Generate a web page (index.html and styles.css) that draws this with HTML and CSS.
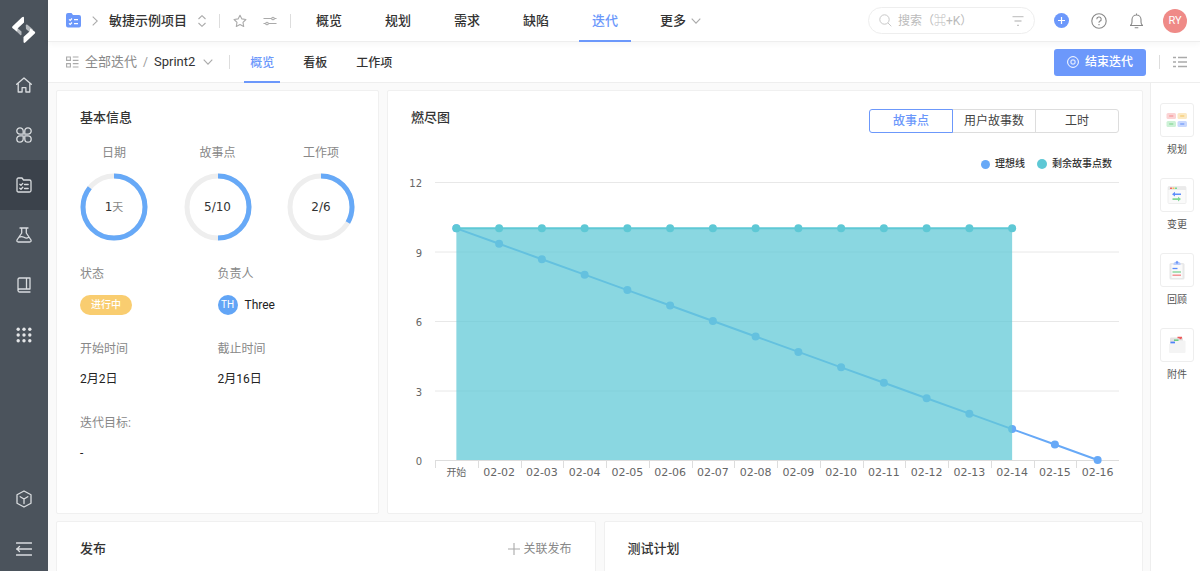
FILE: index.html
```html
<!DOCTYPE html>
<html lang="zh-CN">
<head>
<meta charset="utf-8">
<meta name="viewport" content="width=device-width, initial-scale=1">
<title>敏捷示例项目 - Sprint2</title>
<link rel="stylesheet" href="styles.css">
</head>
<body>
<div class="app">
  <nav class="rail" aria-label="主导航">
    <a class="rail-logo" href="#" aria-label="首页">
      <svg width="24" height="28" viewBox="0 0 24 28">
        <path d="M5.500 12 9.500 15.500V18.500Q9.200 20 8 18.800L3 14Z" fill="#b5b9bd"/>
        <path d="M0.600 10.200 10 1.200Q12 -0.200 12 2V6.500L5.800 12.300 5 15.500 0.600 12.200Q-0.400 11.200 0.600 10.200Z" fill="#fff"/>
        <path d="M13.800 9.500Q14 7.800 15.500 8.800L21 13.500 18 16.500 14 13Z" fill="#b5b9bd"/>
        <path d="M18.300 12.500 22.600 15.500Q23.800 16.500 22.800 17.600L13.500 26.300Q11.500 27.800 11.500 25.500V21L17.500 15.500Z" fill="#fff"/>
      </svg>
    </a>
    <a class="rail-item" href="#" aria-label="工作台">
      <svg class="line" width="16" height="16" viewBox="0 0 16 16"><path d="M0.700 7.300 8 0.900 15.300 7.300M2.200 6.200V15H6.100V10.600H9.900V15H13.800V6.200"/></svg>
    </a>
    <a class="rail-item" href="#" aria-label="应用">
      <svg class="line" width="16" height="16" viewBox="0 0 16 16"><path d="M7.200 7.200H4A3.200 3.200 0 1 1 7.200 4ZM8.800 7.200H12A3.200 3.200 0 1 0 8.800 4ZM7.200 8.800H4A3.200 3.200 0 1 0 7.200 12ZM8.800 8.800H12A3.200 3.200 0 1 1 8.800 12Z"/></svg>
    </a>
    <a class="rail-item rail-item-active" href="#" aria-label="项目" aria-current="page">
      <svg class="line" width="16" height="16" viewBox="0 0 16 16"><path d="M1 2.500Q1 1 2.500 1H6L7.500 3H13.500Q15 3 15 4.500V13.500Q15 15 13.500 15H2.500Q1 15 1 13.500ZM3.800 7.300 5 8.300 6.800 6.400M3.800 11.200 5 12.200 6.800 10.300M8.500 7.500H12.200M8.500 11.500H12.200"/></svg>
    </a>
    <a class="rail-item" href="#" aria-label="测试">
      <svg class="line" width="16" height="16" viewBox="0 0 16 16"><path d="M4 1H12M5.700 1V6L1 13Q0.500 15 2.300 15H13.700Q15.500 15 15 13L10.300 6V1M3 10.300Q5.500 8.800 8 10.300T12.800 10.300"/></svg>
    </a>
    <a class="rail-item" href="#" aria-label="知识">
      <svg class="line" width="16" height="16" viewBox="0 0 16 16"><path d="M14 12V1H3.500Q2 1 2 2.500V13.500Q2 15 3.500 15H14M2 13.500Q2 12 3.500 12H14M10.500 1V12"/></svg>
    </a>
    <a class="rail-item" href="#" aria-label="更多应用">
      <svg width="16" height="16" viewBox="0 0 16 16" fill="#e4e6e8"><circle cx="2.200" cy="2.200" r="1.700"/><circle cx="8" cy="2.200" r="1.700"/><circle cx="13.800" cy="2.200" r="1.700"/><circle cx="2.200" cy="8" r="1.700"/><circle cx="8" cy="8" r="1.700"/><circle cx="13.800" cy="8" r="1.700"/><circle cx="2.200" cy="13.800" r="1.700"/><circle cx="8" cy="13.800" r="1.700"/><circle cx="13.800" cy="13.800" r="1.700"/></svg>
    </a>
    <a class="rail-item rail-bottom" href="#" aria-label="产品">
      <svg class="line" width="16" height="18" viewBox="0 0 16 18"><path d="M8 1 15 4.800V13.200L8 17 1 13.200V4.800ZM4.200 6.700 8 9 11.800 6.700M8 9V13.500"/></svg>
    </a>
    <button class="rail-item" type="button" aria-label="展开导航">
      <svg class="line" width="16" height="14" viewBox="0 0 16 14"><path d="M0.500 1H15.500M0.500 7H15.500M0.500 13H15.500M3.500 4.500 1 7 3.500 9.500"/></svg>
    </button>
  </nav>

  <div class="main">
    <header class="topbar">
      <a class="project-icon" href="#" aria-label="项目">
        <svg width="15" height="15" viewBox="0 0 15 15"><path d="M0 2Q0 0 2 0H5.500L7 2H13Q15 2 15 4V12.500Q15 14.500 13 14.500H2Q0 14.500 0 12.500Z" fill="#6c98fb"/><path d="M3 6.400 4.200 7.400 6 5.500M3 10.400 4.200 11.400 6 9.500M8 6.600H12M8 10.600H12" fill="none" stroke="#fff" stroke-width="1.200"/></svg>
      </a>
      <svg class="muted crumb-arrow" width="6" height="10" viewBox="0 0 6 10"><path d="M0.700 0.700 5.300 5 0.700 9.300"/></svg>
      <button class="project-name" type="button">敏捷示例项目
        <svg class="muted" width="8" height="12" viewBox="0 0 8 12"><path d="M0.500 4 4 0.700 7.500 4M0.500 8 4 11.300 7.500 8"/></svg>
      </button>
      <span class="divider"></span>
      <button class="icon-button star" type="button" aria-label="收藏">
        <svg class="muted" width="14" height="14" viewBox="0 0 14 14"><path d="M7 1.200 8.900 4.900 12.900 5.500 10 8.400 10.700 12.500 7 10.600 3.300 12.500 4 8.400 1.100 5.500 5.100 4.900Z" stroke-linejoin="round"/></svg>
      </button>
      <button class="icon-button sliders" type="button" aria-label="设置">
        <svg class="muted" width="14" height="12" viewBox="0 0 14 12"><path d="M0.500 3.500H8.500M11.500 3.500H13.500M0.500 8.500H2.500M5.500 8.500H13.500"/><circle cx="10" cy="3.500" r="1.300"/><circle cx="4" cy="8.500" r="1.300"/></svg>
      </button>
      <span class="divider"></span>
      <nav class="topnav" aria-label="项目导航">
        <a href="#">概览</a>
        <a href="#">规划</a>
        <a href="#">需求</a>
        <a href="#">缺陷</a>
        <a class="current" href="#" aria-current="page">迭代</a>
        <a class="more" href="#">更多
          <svg class="muted" width="10" height="6" viewBox="0 0 10 6"><path d="M0.700 0.700 5 5.200 9.300 0.700"/></svg>
        </a>
      </nav>
      <div class="top-tools">
        <label class="search">
          <svg class="faint" width="13" height="13" viewBox="0 0 13 13"><circle cx="5.500" cy="5.500" r="4.700"/><path d="M9 9 12.300 12.300"/></svg>
          <input type="search" placeholder="搜索（⌘+K）" aria-label="搜索">
          <svg class="faint" width="12" height="10" viewBox="0 0 12 10"><path d="M0.500 0.500H11.500M2.500 5H9.500M5 9.500H7" stroke-width="1.300"/></svg>
        </label>
        <button class="icon-button" type="button" aria-label="新建">
          <svg width="15" height="15" viewBox="0 0 15 15"><circle cx="7.500" cy="7.500" r="7.500" fill="#6c98fb"/><path d="M7.500 4V11M4 7.500H11" stroke="#fff" stroke-width="1.200"/></svg>
        </button>
        <button class="icon-button" type="button" aria-label="帮助">
          <svg class="dark" width="16" height="16" viewBox="0 0 16 16"><circle cx="8" cy="8" r="7.200"/><path d="M5.800 6.300A2.200 2.200 0 1 1 8.700 8.300Q8 8.600 8 9.800M8 11V12.200"/></svg>
        </button>
        <button class="icon-button" type="button" aria-label="通知">
          <svg class="dark" width="15" height="16" viewBox="0 0 15 16"><path d="M7.500 0.500V2M1 12.500H14M1.500 12.500Q3 11 3 9V6.500A4.500 4.500 0 0 1 12 6.500V9Q12 11 13.500 12.500M5.700 14.800H9.300"/></svg>
        </button>
        <button class="avatar avatar-me" type="button">RY</button>
      </div>
    </header>

    <div class="subbar">
      <svg class="muted" width="13" height="12" viewBox="0 0 13 12"><path d="M0.600 1H4.400V4.400H0.600ZM0.600 7.600H4.400V11H0.600ZM6.800 1H12.500M6.800 4.400H12.500M6.800 7.600H12.500M6.800 11H12.500"/></svg>
      <a class="all-sprints" href="#">全部迭代</a>
      <span class="slash">/</span>
      <button class="sprint-name" type="button">Sprint2
        <svg class="muted" width="10" height="6" viewBox="0 0 10 6"><path d="M0.700 0.700 5 5.200 9.300 0.700"/></svg>
      </button>
      <span class="divider"></span>
      <nav class="subnav" aria-label="迭代视图">
        <a class="current" href="#" aria-current="page">概览</a>
        <a href="#">看板</a>
        <a href="#">工作项</a>
      </nav>
      <div class="sub-tools">
        <button class="primary" type="button">
          <svg width="12" height="12" viewBox="0 0 12 12" fill="none" stroke="#fff"><circle cx="6" cy="6" r="5.400"/><rect x="4" y="4" width="4" height="4" rx="1"/></svg>
          结束迭代
        </button>
        <span class="divider"></span>
        <button class="icon-button" type="button" aria-label="详情列表">
          <svg class="muted" width="14" height="12" viewBox="0 0 14 12"><path d="M0 1.500H3M5 1.500H14M0 6H3M5 6H14M0 10.500H3M5 10.500H14" stroke-width="1.300"/></svg>
        </button>
      </div>
    </div>

    <div class="workspace">
      <main class="content">
        <div class="row row-overview">
          <section class="card">
            <h2>基本信息</h2>
            <ul class="rings">
              <li><span class="label">日期</span>
                <div class="ring"><svg viewBox="0 0 68 68"><circle class="track" cx="34" cy="34" r="31"/><circle class="value" cx="34" cy="34" r="31" pathLength="100" stroke-dasharray="85.700 100"/></svg><span class="ring-text">1<small>天</small></span></div></li>
              <li><span class="label">故事点</span>
                <div class="ring"><svg viewBox="0 0 68 68"><circle class="track" cx="34" cy="34" r="31"/><circle class="value" cx="34" cy="34" r="31" pathLength="100" stroke-dasharray="50 100"/></svg><span class="ring-text">5/10</span></div></li>
              <li><span class="label">工作项</span>
                <div class="ring"><svg viewBox="0 0 68 68"><circle class="track" cx="34" cy="34" r="31"/><circle class="value" cx="34" cy="34" r="31" pathLength="100" stroke-dasharray="33.300 100"/></svg><span class="ring-text">2/6</span></div></li>
            </ul>
            <dl class="facts">
              <div><dt>状态</dt><dd><span class="status">进行中</span></dd></div>
              <div><dt>负责人</dt><dd class="owner"><span class="avatar avatar-owner">TH</span>Three</dd></div>
              <div><dt>开始时间</dt><dd>2月2日</dd></div>
              <div><dt>截止时间</dt><dd>2月16日</dd></div>
              <div><dt>迭代目标:</dt><dd>-</dd></div>
            </dl>
          </section>

          <section class="card">
            <div class="card-head">
              <h2>燃尽图</h2>
              <div class="segments" role="group" aria-label="统计方式">
                <button class="selected" type="button" aria-pressed="true">故事点</button>
                <button type="button" aria-pressed="false">用户故事数</button>
                <button type="button" aria-pressed="false">工时</button>
              </div>
            </div>
            <ul class="legend">
              <li><i class="dot dot-ideal"></i>理想线</li>
              <li><i class="dot dot-left"></i>剩余故事点数</li>
            </ul>
            <svg class="chart" id="burndown" viewBox="0 0 708 312" role="img" aria-label="燃尽图"></svg>
          </section>
        </div>

        <div class="row row-related">
          <section class="card">
            <div class="card-head">
              <h2>发布</h2>
              <button class="link-button" type="button">
                <svg class="muted" width="12" height="12" viewBox="0 0 12 12"><path d="M6 0V12M0 6H12"/></svg>
                关联发布
              </button>
            </div>
          </section>
          <section class="card"><h2>测试计划</h2></section>
        </div>
      </main>

      <aside class="dock" aria-label="迭代组件">
        <a href="#"><span class="tile">
          <svg width="22" height="16" viewBox="0 0 22 16"><rect x="0.500" y="1" width="9.500" height="6" rx="1.500" fill="#fbd3d4"/><rect x="11.500" y="1" width="9.500" height="6" rx="1.500" fill="#fbe9c3"/><rect x="0.500" y="9" width="9.500" height="6" rx="1.500" fill="#cdf1d6"/><rect x="11.500" y="9" width="9.500" height="6" rx="1.500" fill="#c9d8fd"/><path d="M3.200 4H7.300" stroke="#f28b8c"/><path d="M14.200 4H18.300" stroke="#f3c35d"/><path d="M3.200 12H7.300" stroke="#78d08b"/><path d="M14.200 12H18.300" stroke="#5d8cf9"/></svg>
        </span>规划</a>
        <a href="#"><span class="tile">
          <svg width="20" height="18" viewBox="0 0 20 18"><rect x="1" y="0.500" width="18" height="17" rx="1" fill="#fafafa" stroke="#eee"/><path d="M1 0.500H19V4H1Z" fill="#eaeaea"/><path d="M3 2.200H5" stroke="#f0696b" stroke-width="1.400"/><path d="M5.500 2.200H7.500" stroke="#f5c04c" stroke-width="1.400"/><path d="M8 2.200H10" stroke="#73d897" stroke-width="1.400"/><path d="M8 5.800 5 8.200 8 10.600V9H14V7.400H8Z" fill="#5f8ffb"/><path d="M11 10.700 14 13.100 11 15.500V13.900H5.500V12.300H11Z" fill="#82d895"/></svg>
        </span>变更</a>
        <a href="#"><span class="tile">
          <svg width="18" height="20" viewBox="0 0 18 20"><rect x="1.500" y="3" width="15" height="16.500" rx="1.500" fill="#e8e8e8"/><rect x="3.500" y="4.500" width="11" height="13.500" fill="#fafafa"/><path d="M5.500 3.500Q5.500 2 7.500 2 9 -0.500 10.500 2 12.500 2 12.500 3.500V5H5.500Z" fill="#b8ccfb"/><circle cx="9" cy="2.500" r="1.200" fill="#6d97f8"/><path d="M4.500 8.500H9.500" stroke="#5b8cfb" stroke-width="1.300"/><path d="M4.500 12H13" stroke="#7ed292" stroke-width="1.300"/><path d="M4.500 15.200H13" stroke="#f38183" stroke-width="1.300"/></svg>
        </span>回顾</a>
        <a href="#"><span class="tile">
          <svg width="20" height="18" viewBox="0 0 20 18"><path d="M3 2.500Q3 1.500 4 1.500H15Q16 1.500 16 2.500V8H3Z" fill="#e3e3e3"/><path d="M2 8 10 4.500H17.500Q18.500 4.500 18.500 5.500V16Q18.500 17 17.500 17H3Q2 17 2 16Z" fill="#f4f4f4"/><path d="M10.500 1.500H15M12.500 2.500H14.500" stroke="#ec5c5c" stroke-width="1.500"/><path d="M7 4.200H11.500" stroke="#67cc80" stroke-width="1.500"/><path d="M3.500 6.500H8" stroke="#4e83fb" stroke-width="1.700"/></svg>
        </span>附件</a>
      </aside>
    </div>
  </div>
</div>
<script src="chart.js"></script>
</body>
</html>
```
FILE: styles.css
```css
* { box-sizing: border-box; }

body {
  margin: 0;
  font: 12px/20px Roboto, "Noto Sans CJK SC", sans-serif;
  color: #333;
  background: #fafafa;
}

a { color: inherit; text-decoration: none; }
ul, dl, dd, h2 { margin: 0; padding: 0; }
ul { list-style: none; }
h2 { font-size: 13px; font-weight: 500; line-height: 20px; }
svg { display: block; flex: none; }

button {
  margin: 0;
  padding: 0;
  border: 0;
  background: none;
  color: inherit;
  font: inherit;
  cursor: pointer;
}

.line { fill: none; stroke: #d9dcdf; stroke-width: 1.300; stroke-linejoin: round; stroke-linecap: round; }
.muted { fill: none; stroke: #aaa; stroke-width: 1.100; }
.faint { fill: none; stroke: #c8c8c8; }
.dark { fill: none; stroke: #888; stroke-width: 1.100; }

.app { display: flex; height: 100vh; overflow: hidden; }

/* Left rail */
.rail { display: flex; flex-direction: column; flex: none; width: 48px; background: #4b535c; }
.rail-logo { display: flex; align-items: center; justify-content: center; height: 60px; }
.rail-item { display: flex; align-items: center; justify-content: center; height: 50px; }
.rail-item-active { background: #3b424b; }
.rail-bottom { margin-top: auto; }
.rail-item:last-child { margin-bottom: -3px; }

.main { display: flex; flex-direction: column; flex: 1; min-width: 0; }

/* Bars */
.topbar, .subbar {
  display: flex;
  align-items: center;
  flex: none;
  padding: 0 13px 0 18px;
  background: #fff;
  border-bottom: 1px solid #eee;
}
.topbar { height: 42px; position: relative; box-shadow: 0 2px 6px rgba(0, 0, 0, 0.04); }
.subbar { height: 41px; }
.divider { flex: none; width: 1px; height: 14px; background: #ddd; }
.icon-button { display: flex; align-items: center; justify-content: center; min-width: 14px; }

.crumb-arrow { margin: 0 11px 0 11px; }
.project-name { display: flex; align-items: center; gap: 11px; margin-right: 13px; font-size: 13px; font-weight: 500; }
.star { margin: 0 16px 0 13px; }
.sliders { margin-right: 13px; }

.topnav { display: flex; gap: 17px; align-self: stretch; margin-left: 12px; font-size: 13px; font-weight: 500; }
.topnav a, .subnav a { display: flex; align-items: center; border-bottom: 2px solid transparent; border-top: 2px solid transparent; margin-bottom: -1px; }
.topnav a { padding: 0 13px; white-space: nowrap; }
.topnav .more { gap: 5px; padding-left: 12px; }
.topnav .current, .subnav .current { color: #6c98fb; border-bottom-color: #6c98fb; }

.top-tools { display: flex; align-items: center; gap: 22px; margin-left: auto; }
.search {
  display: flex;
  align-items: center;
  gap: 6px;
  width: 167px;
  height: 27px;
  margin-right: -3px;
  padding: 0 10px;
  border: 1px solid #eee;
  border-radius: 14px;
}
.search input { flex: 1; min-width: 0; padding: 0; border: 0; outline: 0; background: none; font: inherit; color: #333; }
.search input::placeholder { color: #bbb; opacity: 1; }

.avatar { display: flex; align-items: center; justify-content: center; border-radius: 50%; color: #fff; }
.avatar-me { width: 24px; height: 24px; margin-left: -3px; background: #ef8a87; font-size: 11px; }
.avatar-owner { width: 20px; height: 20px; background: #62a5f6; font-size: 10px; }

.all-sprints { margin-left: 6px; color: #888; font-size: 13px; }
.slash { margin: 0 6px; color: #999; }
.sprint-name { display: flex; align-items: center; gap: 8px; margin-right: 16px; font-size: 13px; }
.subnav { display: flex; gap: 17px; align-self: stretch; margin-left: 14px; font-weight: 500; }
.subnav a { padding: 0 6px; }
.sub-tools { display: flex; align-items: center; gap: 13px; margin-left: auto; }
.primary {
  display: flex;
  align-items: center;
  justify-content: center;
  gap: 6px;
  width: 92px;
  height: 27px;
  border-radius: 3px;
  background: #6c98fb;
  color: #fff;
  font-weight: 500;
}

/* Cards */
.workspace { display: flex; flex: 1; min-height: 0; }
.content { display: flex; flex-direction: column; gap: 7px; flex: 1; min-width: 0; padding: 7px 7px 0 8px; overflow: hidden; }
.row { display: grid; gap: 8px; }
.row-overview { grid-template-columns: 323px 1fr; }
.row-related { grid-template-columns: 1fr 1fr; }
.card { min-width: 0; padding: 17px 23px 0; background: #fff; border: 1px solid #f0f0f0; border-radius: 2px; }
.row-overview .card { min-height: 424px; }
.row-related .card { min-height: 120px; }
.card-head { display: flex; align-items: flex-start; justify-content: space-between; }

.rings { display: flex; justify-content: space-between; margin-top: 15px; }
.rings li { width: 68px; text-align: center; }
.label, dt { color: #888; }
.ring { display: grid; place-items: center; margin-top: 10px; }
.ring > * { grid-area: 1 / 1; }
.ring svg { width: 68px; height: 68px; transform: rotate(-90deg); fill: none; stroke-width: 5; }
.track { stroke: #eee; }
.value { stroke: #67a9f7; }
.ring-text { font: 12px/20px "DejaVu Sans", "Noto Sans CJK SC", sans-serif; }
.ring-text small { font-size: 11px; color: #888; }

.facts { display: grid; grid-template-columns: 1fr 1fr; row-gap: 24px; margin-top: 23px; }
.facts dd { margin-top: 10px; color: #222; }
.facts div:nth-child(-n+2) dd { margin-top: 11px; }
.status { display: inline-block; vertical-align: top; padding: 0 11px; border-radius: 10px; background: #f9cd70; color: #fff; font-size: 10px; font-weight: 500; }
.owner { display: flex; align-items: center; gap: 7px; }

.segments { display: flex; margin-top: 1px; }
.segments button { width: 84px; height: 24px; margin-left: -1px; border: 1px solid #ddd; color: #444; }
.segments button:first-child { border-radius: 3px 0 0 3px; }
.segments button:last-child { border-radius: 0 3px 3px 0; }
.segments .selected { z-index: 1; border-color: #6c98fb; color: #6c98fb; font-weight: 500; }

.legend { display: flex; justify-content: flex-end; gap: 12px; margin: 21px 7px 0 0; font-size: 10px; font-weight: 500; }
.legend li { display: flex; align-items: center; gap: 5px; }
.dot { width: 9px; height: 9px; border-radius: 50%; }
.dot-ideal { background: #67a9f7; }
.dot-left { width: 10px; height: 10px; background: #5ec8d5; }

.chart { width: 100%; height: auto; overflow: visible; }
.chart text { font: 11px "DejaVu Sans", "Noto Sans CJK SC", sans-serif; fill: #666; }
.chart .small { font-size: 10px; }
.grid-line { stroke: #e8e8e8; }
.axis-line { stroke: #ddd; }
.ideal-line { fill: none; stroke: #67a9f7; stroke-width: 2; }
.ideal-dot { fill: #67a9f7; }
.left-area { fill: #63cad7; opacity: 0.750; }
.left-line { stroke: #5ec8d5; stroke-width: 2; }
.left-dot { fill: #5ec8d5; }

.link-button { display: flex; align-items: center; gap: 3px; color: #888; }

/* Right dock */
.dock { display: flex; flex-direction: column; align-items: center; gap: 18px; flex: none; width: 50px; padding: 20px 0 0 3px; background: #fff; border-left: 1px solid #eee; font-size: 10px; color: #555; }
.dock a { display: flex; flex-direction: column; align-items: center; gap: 3px; }
.tile { display: flex; align-items: center; justify-content: center; width: 34px; height: 34px; border: 1px solid #eee; border-radius: 3px; }
```
FILE: chart.js
```js
const chart = document.getElementById("burndown");
const days = ["开始"];
for (let d = 2; d <= 16; d++) days.push("02-" + String(d).padStart(2, "0"));

const left = 24, right = 708, top12 = 8, bottom = 286;
const step = (right - left) / days.length;
const x = i => left + step * (i + 0.5);
const y = v => bottom - (bottom - top12) * v / 12;

function add(name, cls, attrs, text) {
  const el = document.createElementNS("http://www.w3.org/2000/svg", name);
  if (cls) el.setAttribute("class", cls);
  for (const key in attrs) el.setAttribute(key, attrs[key]);
  if (text) el.textContent = text;
  chart.appendChild(el);
}

for (const v of [0, 3, 6, 9, 12]) {
  add("line", v ? "grid-line" : "axis-line", { x1: left, x2: right, y1: y(v) + 0.5, y2: y(v) + 0.5 });
  add("text", "small", { x: 11, y: y(v) + 5, "text-anchor": "end" }, String(v));
}
days.forEach((day, i) => {
  const tick = Math.round(left + step * i) + 0.5;
  add("line", "axis-line", { x1: tick, x2: tick, y1: bottom, y2: bottom + 8 });
  add("text", i ? "" : "small", { x: x(i), y: bottom + 16, "text-anchor": "middle" }, day);
});

const ideal = days.map((_, i) => [x(i), y(10 - 10 * i / 15)]);
add("polyline", "ideal-line", { points: ideal.join(" ") });
ideal.forEach(([cx, cy]) => add("circle", "ideal-dot", { cx, cy, r: 4 }));

const last = 13;
add("rect", "left-area", { x: x(0), y: y(10), width: x(last) - x(0), height: bottom - y(10) });
add("line", "left-line", { x1: x(0), x2: x(last), y1: y(10), y2: y(10) });
for (let i = 0; i <= last; i++) add("circle", "left-dot", { cx: x(i), cy: y(10), r: 4 });
```
